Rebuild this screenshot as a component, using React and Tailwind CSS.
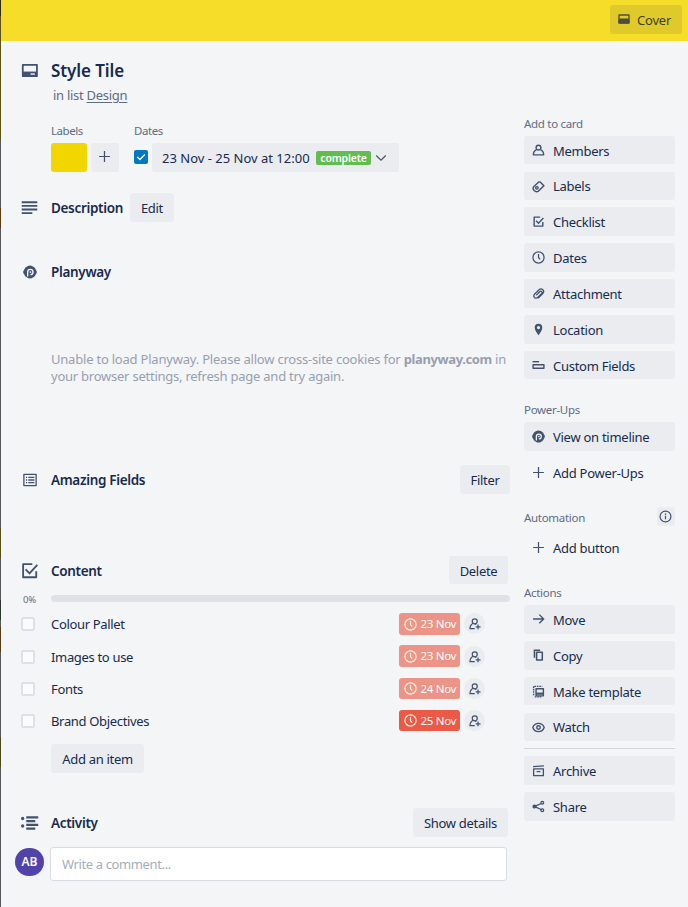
import React from "react";

function Svg({ size = 14, children, className = "", sw = 2 }) {
  return (
    <svg width={size} height={size} viewBox="0 0 24 24" fill="none" stroke="currentColor" strokeWidth={sw} className={`block shrink-0 ${className}`}>
      {children}
    </svg>
  );
}

const icons = {
  members: (
    <Svg size={13} sw={2.6}>
      <circle cx="12" cy="6.8" r="4.4" />
      <path d="M8.5 10.300C5 12 2.500 15.500 2.500 20H21.500C21.500 15.500 19 12 15.500 10.300" strokeLinejoin="round" />
    </Svg>
  ),
  labels: (
    <Svg size={13} sw={2.6}>
      <path d="M12.500 3.500H15L22 10.500L12 20.500C9 22.500 6 21.500 4 19.500C1.500 17 1.500 14 4 11.500Z" strokeLinejoin="round" />
      <circle cx="9" cy="14.500" r="2.300" />
    </Svg>
  ),
  checklist: (
    <Svg size={13} sw={2.6}>
      <path d="M15 4H4V20.500H20V13" strokeLinejoin="round" />
      <path d="M7.500 10.500L12 15L21 5.500" />
    </Svg>
  ),
  clock: (
    <Svg size={13} sw={2.3}>
      <circle cx="12" cy="12" r="10.300" />
      <path d="M12 5.500V12L15 15.500" />
    </Svg>
  ),
  attachment: (
    <Svg size={13} sw={2.4}>
      <path d="M12 20L19.500 12.500C22 10 22 7 20 5C18 3 15 3 12.500 5.500L5 13C3 15 3 17.500 4.500 19.200C6.500 21 9 21 11 19L17.500 12.500C19 11 19 9.500 18 8.500C17 7.500 15.500 7.500 14.200 8.800L8.500 14.500" strokeLinecap="round" />
    </Svg>
  ),
  location: (
    <Svg size={13}>
      <path fill="currentColor" stroke="none" fillRule="evenodd" d="M12 1.500C7.500 1.500 5 4.500 5 8.500C5 13.500 9 19 12 22.500C15 19 19 13.500 19 8.500C19 4.500 16.500 1.500 12 1.500ZM12 5.500A3 3 0 1 1 12 11.500A3 3 0 1 1 12 5.500Z" />
    </Svg>
  ),
  fields: (
    <Svg size={13} sw={2.6}>
      <path d="M1 5H13" />
      <path d="M2 10.500H22V17H2Z" strokeLinejoin="round" />
    </Svg>
  ),
  planyway: <Planyway size={13} />,
  plus: (
    <Svg size={13} sw={2.3}>
      <path d="M12 2V22M2 12H22" />
    </Svg>
  ),
  move: (
    <Svg size={13} sw={2.5}>
      <path d="M2 11H21M13.500 3L21.500 11L13.500 19" />
    </Svg>
  ),
  copy: (
    <Svg size={13} sw={2.8}>
      <path d="M4.500 16V2.500H15" />
      <path d="M8.500 6H19V20.500H8.500Z" strokeLinejoin="round" />
    </Svg>
  ),
  template: (
    <Svg size={13} sw={2.6}>
      <path d="M3 19V2.500H19" strokeDasharray="3 1.500" />
      <path d="M7.500 7H21V20H7.500Z" strokeLinejoin="round" />
      <path d="M7.500 16H21" strokeWidth="4" />
      <path d="M5 22H17" strokeDasharray="3 1.500" />
    </Svg>
  ),
  watch: (
    <Svg size={13} sw={2.5}>
      <path d="M1.500 12C5 2 19 2 22.500 12C19 22 5 22 1.500 12Z" />
      <circle cx="12" cy="12" r="3.300" />
    </Svg>
  ),
  archive: (
    <Svg size={13} sw={2.4}>
      <path d="M2 5L22 3.500M3 9H21V21.500H3Z" strokeLinejoin="round" />
      <path d="M8.500 14H15.500" />
    </Svg>
  ),
  share: (
    <Svg size={13} sw={2.4}>
      <circle cx="4.500" cy="12" r="2.500" fill="currentColor" />
      <circle cx="19" cy="5" r="2.500" />
      <circle cx="19" cy="19" r="2.500" />
      <path d="M7 11L17 6.500M7 13L17 17.500" />
    </Svg>
  ),
};

function Planyway({ size }) {
  return (
    <Svg size={size}>
      <path fill="currentColor" stroke="none" d="M7 2.500Q12-1 17 2.500Q21 4 22 8Q25.500 12 22 16Q21 20 17 21.500Q12 25 7 21.500Q3 20 2 16Q-1.500 12 2 8Q3 4 7 2.500Z" />
      <path d="M8 19.500V12A4.600 4.600 0 1 1 12.600 16.600" stroke="#f4f5f7" strokeWidth="2.300" />
      <circle cx="12.700" cy="12" r="1.500" fill="#f4f5f7" stroke="none" />
    </Svg>
  );
}

function SideButton({ icon, label, box = "mt-[7px] h-[29px]", plain = false, raised = false }) {
  return (
    <div className={`flex w-[151px] shrink-0 items-start rounded-[3px] ${plain ? "" : "bg-[#eaecf0]"} ${box}`}>
      <span className="ml-2 mt-2 w-[21px] text-[#42526e]">{icons[icon]}</span>
      <span className={`text-[13px] leading-[18px] tracking-[-0.27px] text-[#172b4d] ${raised ? "mt-[5px]" : "mt-[6px]"}`}>{label}</span>
    </div>
  );
}

function SideTitle({ children, box }) {
  return <div className={`h-4 shrink-0 text-[11.500px] leading-4 tracking-[-0.3px] text-[#5e6c84] ${box}`}>{children}</div>;
}

function Section({ icon, title, box, children, iconCls = "", titleCls = "" }) {
  return (
    <div className={`flex shrink-0 items-center ${box}`}>
      <span className={`flex w-[30px] shrink-0 text-[#42526e] ${iconCls}`}>{icon}</span>
      <h3 className={`text-[13.500px] font-semibold leading-5 tracking-[-0.33px] text-[#172b4d] ${titleCls}`}>{title}</h3>
      {children}
    </div>
  );
}

function GreyButton({ children, box }) {
  return <button className={`rounded-[3px] bg-[#eaecf0] pt-[2px] text-center text-[13px] tracking-[-0.3px] text-[#172b4d] ${box}`}>{children}</button>;
}

function Item({ label, date, box, tone, badge = "h-[22px]" }) {
  return (
    <div className={`flex h-[22px] shrink-0 items-start ${box}`}>
      <span className="mt-1 h-[14px] w-[14px] rounded-[2px] border-2 border-[#dfe1e6] bg-[#fafbfc]" />
      <span className="ml-4 mt-px w-[348px] text-[13px] leading-5 tracking-[-0.33px] text-[#172b4d]">{label}</span>
      <span className={`flex w-[61px] items-center rounded-[3px] pl-[5px] text-white ${badge} ${tone}`}>
        <Svg size={13} sw={2.3} className="text-[#fff1dc]"><circle cx="12" cy="12" r="10.300" /><path d="M12 5.500V12L15 16" /></Svg>
        <span className="ml-[3.500px] whitespace-nowrap text-[11.500px] leading-4 tracking-[-0.3px]">{date}</span>
      </span>
      <span className="ml-1 flex h-[21px] w-[21px] items-center justify-center rounded-full bg-[#eaecf0] text-[#42526e]">
        <Svg size={12} sw={2.500}>
          <circle cx="11.500" cy="6.500" r="5" />
          <path d="M8.500 10.500C4.500 12.500 2 16 2 21H11.500M12 11.500L14.500 13" />
          <path d="M18 13V22.500M13.500 17.800H23" />
        </Svg>
      </span>
    </div>
  );
}

export default function App() {
  return (
    <div className="flex h-[907px] w-[688px] overflow-hidden bg-[#f4f5f7] font-['Noto_Sans',sans-serif]">
      <div className="flex w-px shrink-0 flex-col bg-[#55555a]">
        <div className="h-4 bg-[#332c16]" />
        <div className="h-[124px] bg-[#5d5218]" />
        <div className="mt-[68px] h-5 bg-[#5a3a14]" />
        <div className="mt-[300px] h-[30px] bg-[#554f1c]" />
        <div className="mt-[42px] h-5 bg-[#29382a]" />
        <div className="mt-[7px] h-[25px] bg-[#5a3a14]" />
        <div className="mt-[85px] h-[30px] bg-[#4c481e]" />
      </div>
      <div className="w-[687px]">
        <header className="flex h-[41px] items-start justify-end bg-[#f5dd29] pr-[6px] pt-[5px]">
          <button className="flex h-[29px] w-[72px] items-start rounded-[3px] bg-[#e0ca2b] pl-2 text-[#3d401f]">
            <Svg size={12} className="mt-2 text-[#4b4f3a]">
              <path d="M2 4H22V20H2Z" strokeWidth="2.600" strokeLinejoin="round" />
              <path d="M2 12H22V20H2Z" fill="currentColor" />
            </Svg>
            <span className="ml-[7px] mt-[6px] text-[13px] leading-[18px] tracking-[-0.2px]">Cover</span>
          </button>
        </header>

        <div className="flex h-[866px]">
          <main className="flex w-[523px] flex-col pl-5">
            <div className="mt-[18px] flex h-6 shrink-0 items-center">
              <span className="w-[30px] pb-[2px] text-[#42526e]">
                <Svg size={17} sw={2.500}>
                  <path d="M2.500 4H22.500V20H2.500Z" strokeLinejoin="round" />
                  <path d="M2.500 13.500H22.500V20H2.500Z" fill="currentColor" stroke="none" />
                  <path d="M13.500 17H19.500" stroke="#f4f5f7" strokeWidth="2" />
                </Svg>
              </span>
              <h1 className="text-[17px] font-semibold leading-6 tracking-[-0.1px] text-[#172b4d]">Style Tile</h1>
            </div>
            <p className="ml-8 mt-[3px] h-[18px] shrink-0 text-[13px] leading-[18px] tracking-[-0.28px] text-[#5e6c84]">
              in list <span className="underline underline-offset-2">Design</span>
            </p>

            <div className="ml-[30px] mt-[19px] flex h-[49px] shrink-0">
              <div className="w-[83px]">
                <div className="h-5 text-[11.500px] leading-4 tracking-[-0.45px] text-[#5e6c84]">Labels</div>
                <div className="flex gap-1">
                  <span className="h-[29px] w-9 rounded-[3px] bg-[#f2d600]" />
                  <span className="flex h-[29px] w-7 items-center justify-center rounded-[3px] bg-[#eaecf0] pb-[2px] pr-px text-[#42526e]">{icons.plus}</span>
                </div>
              </div>
              <div>
                <div className="h-5 text-[11.500px] leading-4 tracking-[-0.45px] text-[#5e6c84]">Dates</div>
                <div className="flex items-center">
                  <span className="mb-[2px] flex h-[14px] w-[14px] items-center justify-center rounded-[2px] bg-[#0079bf] text-white">
                    <Svg size={10} sw={3}><path d="M3 12L9.500 18L21 6" /></Svg>
                  </span>
                  <div className="ml-1 flex h-[29px] w-[247px] items-center rounded-[3px] bg-[#eaecf0] pl-[10px] text-[#172b4d]">
                    <span className="w-[154px] whitespace-nowrap pt-px text-[13px] leading-[18px]">23 Nov - 25 Nov at 12:00</span>
                    <span className="h-[14px] w-[55px] rounded-[2px] bg-[#61bd4f] text-center text-[10.500px] font-semibold leading-[14px] tracking-[-0.2px] text-white">complete</span>
                    <Svg size={12} sw={2.300} className="ml-[4px] text-[#42526e]"><path d="M2.500 7L12 16.500L21.500 7" /></Svg>
                  </div>
                </div>
              </div>
            </div>

            <Section box="mt-[21px] h-[29px]" title="Description" icon={<Svg size={17} sw={2.700}><path d="M1 4.500H23M1 9.700H23M1 14.900H23M1 20H16" /></Svg>}>
              <GreyButton box="ml-[7px] h-[29px] w-11">Edit</GreyButton>
            </Section>
            <Section box="mt-10 h-5" title="Planyway" iconCls="pl-[2px]" icon={<Planyway size={14} />} />
            <p className="ml-[30px] mt-[69px] h-[35px] w-[480px] shrink-0 text-[13px] leading-[17px] tracking-[-0.21px] text-[#979faf]">
              Unable to load Planyway. Please allow cross-site cookies for <b className="font-bold tracking-[-0.38px]">planyway.com</b> in
              <br />
              <span className="tracking-[-0.24px]">your browser settings, refresh page and try again.</span>
            </p>
            <Section box="mt-[79px] h-[29px] w-[489px]" title="Amazing Fields" iconCls="pl-[2px]" icon={
              <Svg size={14} sw={2.2}>
                <path d="M1.500 2.500H22.500V21.500H1.500Z" strokeLinejoin="round" />
                <path d="M5 7.500H7M5 12H7M5 16.500H7M9 7.500H19.500M9 12H19.500M9 16.500H19.500" />
              </Svg>
            }>
              <GreyButton box="ml-auto h-[29px] w-[50px]">Filter</GreyButton>
            </Section>
            <Section box="mt-[62px] h-[28px] w-[487px]" title="Content" titleCls="pt-[2px]" icon={
              <Svg size={17} sw={2.600}>
                <path d="M16 3H3V21.500H21.500V13" strokeLinejoin="round" />
                <path d="M6.500 10.500L12 16L23 4" />
              </Svg>
            }>
              <GreyButton box="ml-auto h-[28px] w-[59px] pt-[3px]">Delete</GreyButton>
            </Section>
            <div className="mt-[11px] flex h-[7px] shrink-0 items-center">
              <span className="w-[30px] pl-[2px] pt-[3px] text-[9.500px] leading-3 tracking-[-0.3px] text-[#5e6c84]">0%</span>
              <span className="h-[7px] w-[459px] rounded-full bg-[#dfe1e6]" />
            </div>
            <Item box="mt-[11px]" label="Colour Pallet" date="23 Nov" tone="bg-[#ec9488]" />
            <Item box="mt-[11px]" label="Images to use" date="23 Nov" tone="bg-[#ec9488]" badge="-mt-px h-[22px]" />
            <Item box="mt-[10px]" label="Fonts" date="24 Nov" tone="bg-[#ec9488]" badge="h-[21px]" />
            <Item box="mt-[10px]" label="Brand Objectives" date="25 Nov" tone="bg-[#eb5a46]" badge="h-[21px]" />
            <GreyButton box="ml-[30px] mt-[12px] h-[29px] w-[93px] shrink-0">Add an item</GreyButton>

            <Section box="mt-[35px] h-[29px] w-[487px]" title="Activity" icon={
              <Svg size={18} sw={2.700}>
                <path d="M7 4.500H23M7 9.500H19M7 14.500H23M7 19.500H19" />
                <circle cx="2.200" cy="6" r="2.200" fill="currentColor" stroke="none" />
                <circle cx="2.200" cy="16" r="2.200" fill="currentColor" stroke="none" />
              </Svg>
            }>
              <GreyButton box="ml-auto h-[29px] w-[95px]">Show details</GreyButton>
            </Section>
            <div className="-ml-[6px] mt-[10px] flex h-[34px] shrink-0 items-start">
              <span className="mt-px flex h-[28px] w-[29px] items-center justify-center rounded-full bg-[#5243aa] text-[12px] font-semibold text-white">AB</span>
              <div className="ml-[6px] h-[34px] w-[457px] rounded-[3px] border border-[#d9dce2] bg-white pl-[11px] text-[13px] leading-[32px] tracking-[-0.38px] text-[#a5adba]">Write a comment...</div>
            </div>
          </main>

          <aside className="flex w-[151px] flex-col">
            <SideTitle box="mt-[75px]">Add to card</SideTitle>
            <SideButton icon="members" label="Members" box="mt-1 h-7" />
            <SideButton icon="labels" label="Labels" box="mt-2 h-7" raised />
            <SideButton icon="checklist" label="Checklist" />
            <SideButton icon="clock" label="Dates" />
            <SideButton icon="attachment" label="Attachment" />
            <SideButton icon="location" label="Location" />
            <SideButton icon="fields" label="Custom Fields" box="mt-[7px] h-7" />
            <SideTitle box="mt-[23px]">Power-Ups</SideTitle>
            <SideButton icon="planyway" label="View on timeline" box="mt-1 h-[29px]" />
            <SideButton icon="plus" label="Add Power-Ups" plain />
            <div className="mt-5 flex h-[19px] shrink-0 items-start justify-between">
              <SideTitle box="mt-[3px]">Automation</SideTitle>
              <span className="flex h-[19px] w-[18px] items-center justify-center rounded-[3px] bg-[#eaecf0] pb-px pr-px text-[#42526e]">
                <Svg size={13} sw={2.2}><circle cx="12" cy="12" r="10" /><path d="M12 10.500V17M12 6.500V9" /></Svg>
              </span>
            </div>
            <SideButton icon="plus" label="Add button" plain />
            <SideTitle box="mt-[23px]">Actions</SideTitle>
            <SideButton icon="move" label="Move" box="mt-1 h-[29px]" />
            <SideButton icon="copy" label="Copy" />
            <SideButton icon="template" label="Make template" box="mt-[7px] h-7" />
            <SideButton icon="watch" label="Watch" box="mt-2 h-7" raised />
            <div className="mt-[7px] h-px shrink-0 bg-[#d3d6dc]" />
            <SideButton icon="archive" label="Archive" />
            <SideButton icon="share" label="Share" />
          </aside>
        </div>
      </div>
    </div>
  );
}
